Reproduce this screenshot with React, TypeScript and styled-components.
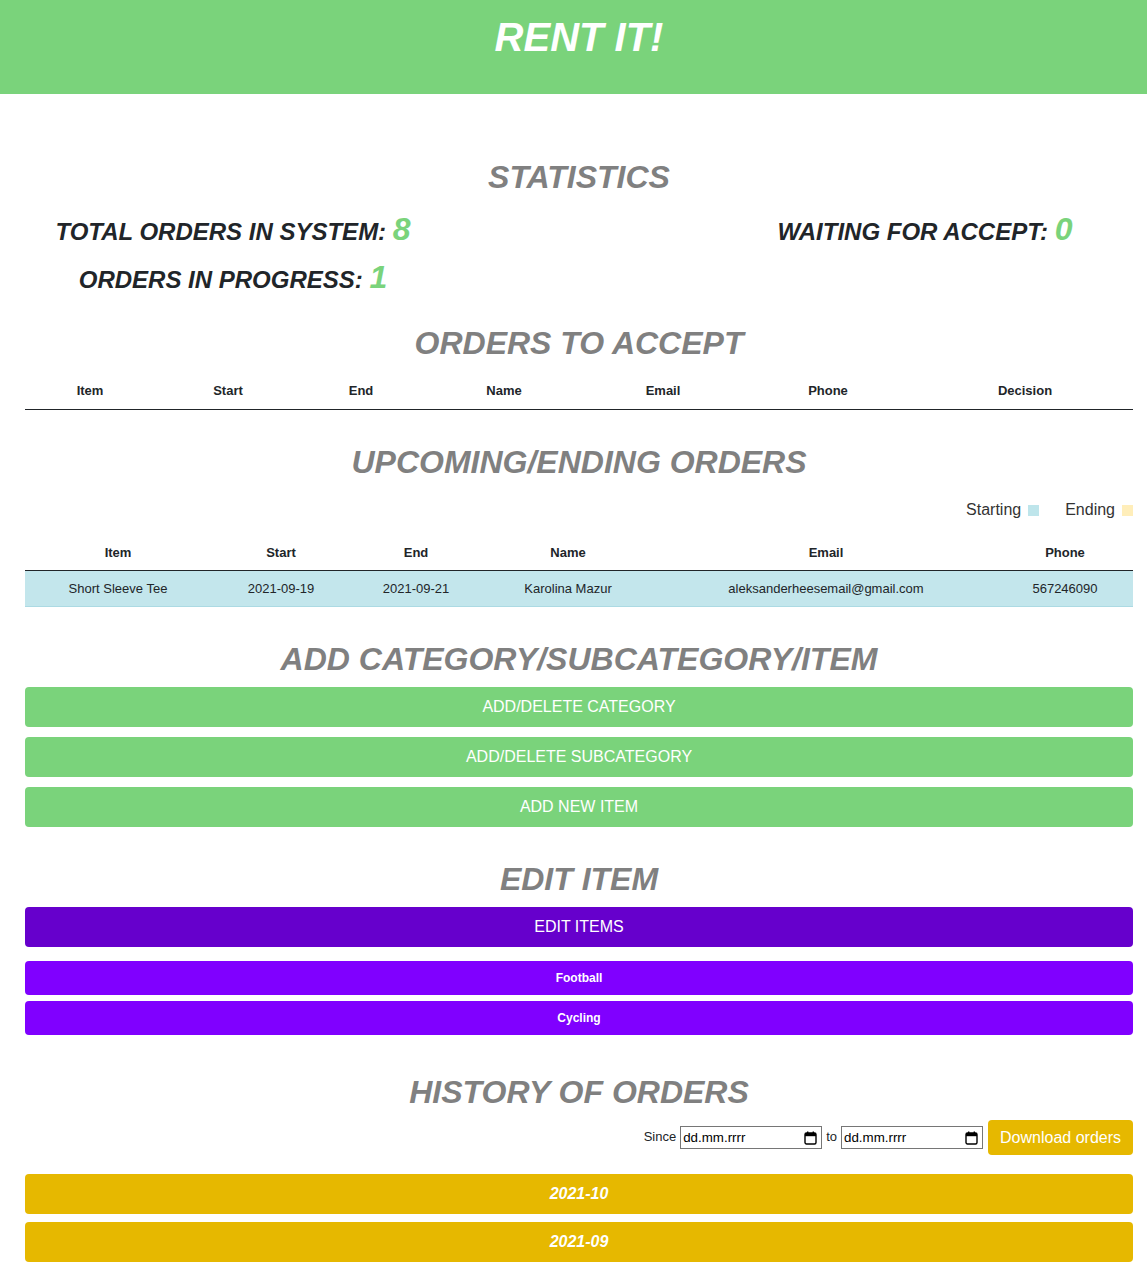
import React from "react";
import styled, { createGlobalStyle } from "styled-components";

const GlobalStyle = createGlobalStyle`
  html, body { margin: 0; padding: 0; background: #fff; }
  body { font-family: "Liberation Sans", Arial, sans-serif; color: #212529; }
  * { box-sizing: border-box; }
`;

const GREEN = "#7ad37b";

const Header = styled.header`
  background: ${GREEN};
  height: 94px;
  padding: 13px 14px 0 25px;
`;

const Brand = styled.h1`
  margin: 0;
  text-align: center;
  color: #fff;
  font-size: 40px;
  line-height: 48px;
  font-weight: 700;
  font-style: italic;
`;

const Main = styled.main`
  padding: 0 14px 0 25px;
`;

const SectionTitle = styled.h2<{ $top: number }>`
  margin: ${(p) => p.$top}px 0 0;
  text-align: center;
  color: #808080;
  font-size: 32px;
  line-height: 38px;
  font-weight: 700;
  font-style: italic;
`;

const StatsRow = styled.div`
  display: flex;
  justify-content: space-between;
  margin-top: 9px;
`;

const StatColumn = styled.div`
  width: 416px;
  display: flex;
  flex-direction: column;
`;

const StatLine = styled.div`
  height: 48px;
  line-height: 48px;
  text-align: center;
  font-size: 24px;
  font-weight: 700;
  font-style: italic;
  color: #212529;
  white-space: nowrap;
`;

const StatValue = styled.span`
  color: ${GREEN};
  font-size: 32px;
`;

const Table = styled.table<{ $top: number }>`
  width: 100%;
  border-collapse: collapse;
  table-layout: fixed;
  margin-top: ${(p) => p.$top}px;
  font-size: 13px;
`;

const Col = styled.col<{ $w: number }>`
  width: ${(p) => p.$w}px;
`;

const Th = styled.th`
  height: 36px;
  padding: 0 4px;
  text-align: center;
  font-weight: 700;
  color: #212529;
  border-bottom: 1px solid #212529;
`;

const InfoRow = styled.tr`
  background: #c3e6ec;
`;

const Td = styled.td`
  height: 36px;
  padding: 0 4px;
  text-align: center;
  color: #212529;
  border-bottom: 1px solid #acdae3;
`;

const Legend = styled.div`
  display: flex;
  justify-content: flex-end;
  gap: 26px;
  margin-top: 20px;
  font-size: 16px;
  line-height: 18px;
  color: #333;
`;

const LegendItem = styled.span`
  display: inline-flex;
  align-items: center;
  gap: 7px;
`;

const Swatch = styled.span<{ $c: string }>`
  display: inline-block;
  width: 11px;
  height: 11px;
  background: ${(p) => p.$c};
  margin-top: 2px;
`;

const ButtonStack = styled.div<{ $top: number; $gap: number }>`
  display: flex;
  flex-direction: column;
  gap: ${(p) => p.$gap}px;
  margin-top: ${(p) => p.$top}px;
`;

const WideButton = styled.button<{ $bg: string; $h: number; $small?: boolean; $emph?: boolean }>`
  display: block;
  width: 100%;
  height: ${(p) => p.$h}px;
  border: none;
  border-radius: 4px;
  background: ${(p) => p.$bg};
  color: #fff;
  font-family: "Liberation Sans", Arial, sans-serif;
  font-size: ${(p) => (p.$small ? 12 : 16)}px;
  font-weight: ${(p) => (p.$small || p.$emph ? 700 : 400)};
  font-style: ${(p) => (p.$emph ? "italic" : "normal")};
  cursor: pointer;
`;

const FilterBar = styled.div`
  display: flex;
  justify-content: flex-end;
  align-items: center;
  gap: 4px;
  margin-top: 9px;
  font-size: 13px;
  color: #212529;
`;

const FilterLabel = styled.span`
  padding-bottom: 3px;
`;

const DateField = styled.div`
  width: 142px;
  height: 23px;
  border: 1px solid #767676;
  display: flex;
  align-items: center;
  justify-content: space-between;
  padding: 0 4px 0 2px;
  font-size: 13.33px;
  color: #000;
  background: #fff;
`;

const DownloadButton = styled.button`
  height: 35px;
  padding: 0 12px;
  margin-left: 1px;
  border: none;
  border-radius: 4px;
  background: #e6b800;
  color: #fff;
  font-family: "Liberation Sans", Arial, sans-serif;
  font-size: 16px;
`;

const CalendarIcon = () => (
  <svg width="13" height="14" viewBox="0 0 13 14" aria-hidden="true">
    <rect x="1" y="2" width="11" height="11" rx="1.5" fill="none" stroke="#000" strokeWidth="1.4" />
    <rect x="1" y="2" width="11" height="3.2" fill="#000" />
    <rect x="3" y="0.5" width="1.4" height="2.5" fill="#000" />
    <rect x="8.6" y="0.5" width="1.4" height="2.5" fill="#000" />
  </svg>
);

const acceptCols = [
  { label: "Item", w: 130 },
  { label: "Start", w: 146 },
  { label: "End", w: 120 },
  { label: "Name", w: 166 },
  { label: "Email", w: 152 },
  { label: "Phone", w: 178 },
  { label: "Decision", w: 216 },
];

const upcomingCols = [
  { label: "Item", w: 186 },
  { label: "Start", w: 140 },
  { label: "End", w: 130 },
  { label: "Name", w: 174 },
  { label: "Email", w: 342 },
  { label: "Phone", w: 136 },
];

const upcomingRows = [
  ["Short Sleeve Tee", "2021-09-19", "2021-09-21", "Karolina Mazur", "aleksanderheesemail@gmail.com", "567246090"],
];

export default function App() {
  return (
    <>
      <GlobalStyle />
      <Header>
        <Brand>RENT IT!</Brand>
      </Header>
      <Main>
        <SectionTitle $top={64}>STATISTICS</SectionTitle>
        <StatsRow>
          <StatColumn>
            <StatLine>
              TOTAL ORDERS IN SYSTEM: <StatValue>8</StatValue>
            </StatLine>
            <StatLine>
              ORDERS IN PROGRESS: <StatValue>1</StatValue>
            </StatLine>
          </StatColumn>
          <StatColumn>
            <StatLine>
              WAITING FOR ACCEPT: <StatValue>0</StatValue>
            </StatLine>
          </StatColumn>
        </StatsRow>

        <SectionTitle $top={23}>ORDERS TO ACCEPT</SectionTitle>
        <Table $top={11}>
          <colgroup>
            {acceptCols.map((c) => (
              <Col key={c.label} $w={c.w} />
            ))}
          </colgroup>
          <thead>
            <tr>
              {acceptCols.map((c) => (
                <Th key={c.label}>{c.label}</Th>
              ))}
            </tr>
          </thead>
          <tbody />
        </Table>

        <SectionTitle $top={33}>UPCOMING/ENDING ORDERS</SectionTitle>
        <Legend>
          <LegendItem>
            Starting <Swatch $c="#bee5eb" />
          </LegendItem>
          <LegendItem>
            Ending <Swatch $c="#ffeeba" />
          </LegendItem>
        </Legend>
        <Table $top={16}>
          <colgroup>
            {upcomingCols.map((c) => (
              <Col key={c.label} $w={c.w} />
            ))}
          </colgroup>
          <thead>
            <tr>
              {upcomingCols.map((c) => (
                <Th key={c.label}>{c.label}</Th>
              ))}
            </tr>
          </thead>
          <tbody>
            {upcomingRows.map((r) => (
              <InfoRow key={r[0]}>
                {r.map((cell, i) => (
                  <Td key={i}>{cell}</Td>
                ))}
              </InfoRow>
            ))}
          </tbody>
        </Table>

        <SectionTitle $top={33}>ADD CATEGORY/SUBCATEGORY/ITEM</SectionTitle>
        <ButtonStack $top={9} $gap={10}>
          <WideButton $bg={GREEN} $h={40}>ADD/DELETE CATEGORY</WideButton>
          <WideButton $bg={GREEN} $h={40}>ADD/DELETE SUBCATEGORY</WideButton>
          <WideButton $bg={GREEN} $h={40}>ADD NEW ITEM</WideButton>
        </ButtonStack>

        <SectionTitle $top={33}>EDIT ITEM</SectionTitle>
        <ButtonStack $top={9} $gap={0}>
          <WideButton $bg="#6600cc" $h={40}>EDIT ITEMS</WideButton>
        </ButtonStack>
        <ButtonStack $top={14} $gap={6}>
          <WideButton $bg="#8000ff" $h={34} $small>Football</WideButton>
          <WideButton $bg="#8000ff" $h={34} $small>Cycling</WideButton>
        </ButtonStack>

        <SectionTitle $top={38}>HISTORY OF ORDERS</SectionTitle>
        <FilterBar>
          <FilterLabel>Since</FilterLabel>
          <DateField>
            dd.mm.rrrr
            <CalendarIcon />
          </DateField>
          <FilterLabel>to</FilterLabel>
          <DateField>
            dd.mm.rrrr
            <CalendarIcon />
          </DateField>
          <DownloadButton>Download orders</DownloadButton>
        </FilterBar>
        <ButtonStack $top={19} $gap={8}>
          <WideButton $bg="#e6b800" $h={40} $emph>2021-10</WideButton>
          <WideButton $bg="#e6b800" $h={40} $emph>2021-09</WideButton>
        </ButtonStack>
      </Main>
    </>
  );
}
